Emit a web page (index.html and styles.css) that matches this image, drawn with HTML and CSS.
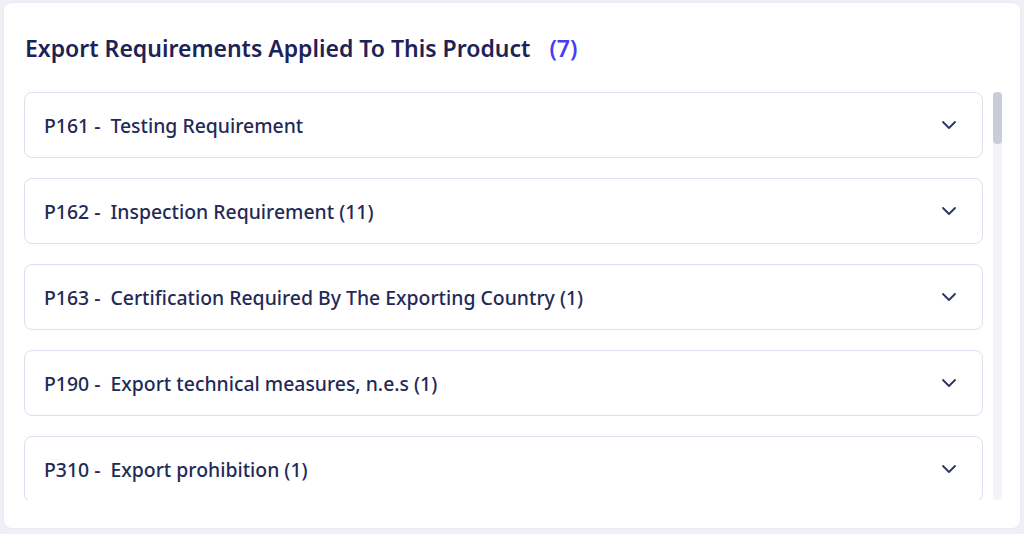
FILE: index.html
```html
<!DOCTYPE html>
<html lang="en">
<head>
<meta charset="utf-8">
<title>Export Requirements</title>
<link rel="stylesheet" href="styles.css">
</head>
<body>
<section class="card">
  <h2 class="title">Export Requirements Applied To This Product <span class="count">(7)</span></h2>
  <div class="scroll">
    <ul class="list">
      <li class="item"><span class="label">P161 -&nbsp; Testing Requirement</span><svg class="chev" viewBox="0 0 16 10" width="16" height="10"><path d="M2 2 L8 8 L14 2" fill="none" stroke="#2b3461" stroke-width="1.8" stroke-linecap="round" stroke-linejoin="round"/></svg></li>
      <li class="item"><span class="label">P162 -&nbsp; Inspection Requirement (11)</span><svg class="chev" viewBox="0 0 16 10" width="16" height="10"><path d="M2 2 L8 8 L14 2" fill="none" stroke="#2b3461" stroke-width="1.8" stroke-linecap="round" stroke-linejoin="round"/></svg></li>
      <li class="item"><span class="label">P163 -&nbsp; Certification Required By The Exporting Country (1)</span><svg class="chev" viewBox="0 0 16 10" width="16" height="10"><path d="M2 2 L8 8 L14 2" fill="none" stroke="#2b3461" stroke-width="1.8" stroke-linecap="round" stroke-linejoin="round"/></svg></li>
      <li class="item"><span class="label">P190 -&nbsp; Export technical measures, n.e.s (1)</span><svg class="chev" viewBox="0 0 16 10" width="16" height="10"><path d="M2 2 L8 8 L14 2" fill="none" stroke="#2b3461" stroke-width="1.8" stroke-linecap="round" stroke-linejoin="round"/></svg></li>
      <li class="item"><span class="label">P310 -&nbsp; Export prohibition (1)</span><svg class="chev" viewBox="0 0 16 10" width="16" height="10"><path d="M2 2 L8 8 L14 2" fill="none" stroke="#2b3461" stroke-width="1.8" stroke-linecap="round" stroke-linejoin="round"/></svg></li>
    </ul>
    <div class="scrollbar"><div class="thumb"></div></div>
  </div>
</section>
</body>
</html>
```
FILE: styles.css
```css
html, body {
  margin: 0;
  padding: 0;
}
body {
  background: #eef0f5;
  font-family: "Noto Sans", "Open Sans", sans-serif;
  padding: 3px 4px 6px 4px;
  height: 534px;
  box-sizing: border-box;
}
.card {
  background: #ffffff;
  border-radius: 8px;
  box-shadow: 0 0 0 1px #e9ebf2;
  padding: 0 18px 28px 20px;
  height: 525px;
  box-sizing: border-box;
  display: flex;
  flex-direction: column;
}
.title {
  margin: 0;
  padding: 29px 0 0 1px;
  height: 89px;
  box-sizing: border-box;
  font-size: 23px;
  font-weight: 600;
  color: #1d2356;
  line-height: 32px;
  letter-spacing: 0;
}
.count {
  color: #4b3cf2;
  margin-left: 13px;
}
.scroll {
  display: flex;
  flex: 1;
  min-height: 0;
  gap: 10px;
}
.list {
  list-style: none;
  margin: 0;
  padding: 0;
  flex: 1;
  overflow: hidden;
  display: flex;
  flex-direction: column;
  gap: 20px;
}
.item {
  flex: 0 0 66px;
  box-sizing: border-box;
  border: 1px solid #dce0ed;
  border-radius: 8px;
  display: flex;
  align-items: center;
  justify-content: space-between;
  padding: 0 25px 0 19px;
}
.label {
  font-size: 19.4px;
  font-weight: 500;
  color: #1f2a57;
  white-space: pre;
}
.chev {
  display: block;
}
.scrollbar {
  width: 9px;
  background: #f3f4f8;
  border-radius: 4px;
}
.thumb {
  height: 52px;
  background: #c9cdd8;
  border-radius: 4px;
}
```
